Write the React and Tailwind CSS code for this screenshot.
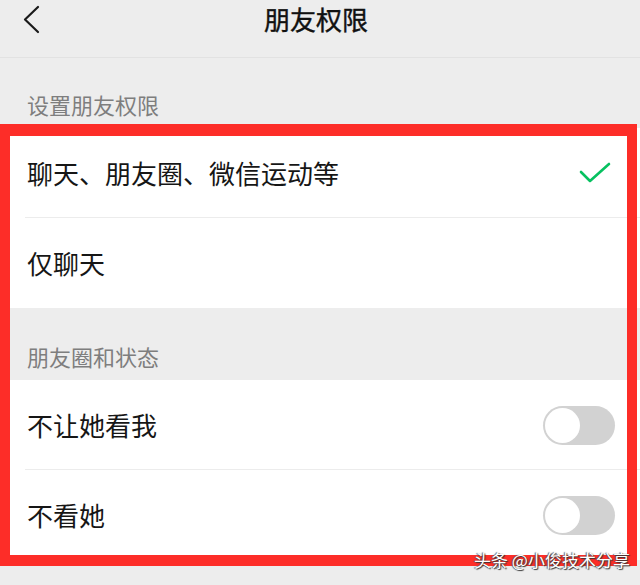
import React from "react";

const font = { fontFamily: '"Noto Sans CJK SC", "Noto Sans", sans-serif' };

function Toggle() {
  return (
    <div className="w-[72px] h-[39px] rounded-full bg-[#d2d2d2] flex items-center px-[2px]">
      <div className="w-[35px] h-[35px] rounded-full bg-white" />
    </div>
  );
}

function Row({ label, right, divider }) {
  return (
    <div className="relative h-[90px] bg-white flex items-center justify-between pl-[27px] pr-[25px]">
      <span className="text-[26px] leading-none text-[#161616]">{label}</span>
      {right}
      {divider && (
        <div className="absolute bottom-0 left-[25px] right-0 h-px bg-[#ececec]" />
      )}
    </div>
  );
}

export default function App() {
  return (
    <div
      className="relative w-[640px] h-[585px] bg-[#ededed] overflow-hidden"
      style={font}
    >
      {/* header */}
      <div className="relative h-[58px] border-b border-[#e2e2e2] flex items-center justify-center">
        <svg
          className="absolute left-[22px] top-[5px]"
          width="20"
          height="30"
          viewBox="0 0 20 30"
          fill="none"
        >
          <polyline
            points="16,2 3,14.5 16,27"
            stroke="#1a1a1a"
            strokeWidth="2.2"
            strokeLinecap="round"
            strokeLinejoin="round"
          />
        </svg>
        <span
          className="text-[26px] leading-none font-normal text-[#111] -mt-[20px] -ml-[8px]"
          style={{ WebkitTextStroke: "0.4px #111" }}
        >
          朋友权限
        </span>
      </div>

      {/* section 1 */}
      <div className="h-[70px] flex items-end pl-[27px] pb-[13px]">
        <span className="text-[22px] leading-none text-[#7e7e7e]">设置朋友权限</span>
      </div>
      <Row
        label="聊天、朋友圈、微信运动等"
        divider
        right={
          <svg width="32" height="22" viewBox="0 0 32 22" fill="none" className="mr-[4px]">
            <polyline
              points="2,10 11,19 30,2"
              stroke="#07c160"
              strokeWidth="2.6"
              strokeLinecap="round"
              strokeLinejoin="round"
            />
          </svg>
        }
      />
      <Row label="仅聊天" />

      {/* section 2 */}
      <div className="h-[72px] flex items-end pl-[27px] pb-[13px]">
        <span className="text-[22px] leading-none text-[#7e7e7e]">朋友圈和状态</span>
      </div>
      <Row label="不让她看我" divider right={<Toggle />} />
      <Row label="不看她" right={<Toggle />} />

      {/* red annotation box */}
      <div className="absolute left-0 top-[124px] w-[637px] h-[442px] border-l-[10px] border-r-[10px] border-t-[12px] border-b-[11px] border-[#fd2d28] pointer-events-none" />

      {/* watermark */}
      <div
        className="absolute left-[474px] top-[551px] text-[17px] leading-none text-white whitespace-nowrap"
        style={{ textShadow: "1px 1px 1px #333, -1px 0 1px #555" }}
      >
        头条 @小俊技术分享
      </div>
    </div>
  );
}
